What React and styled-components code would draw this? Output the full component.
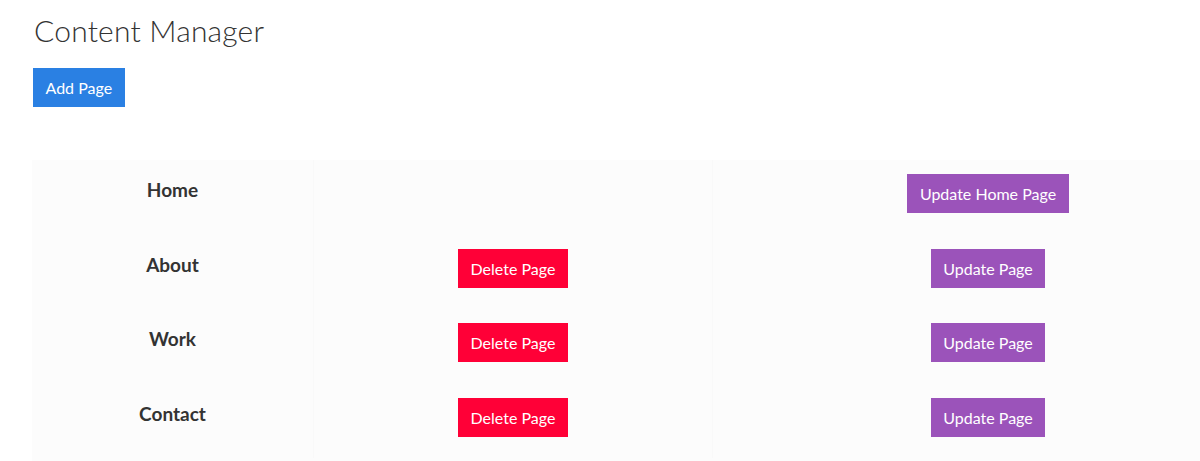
import React from 'react'
import styled, { createGlobalStyle } from 'styled-components'

const pages = [
    { id: 1, name: 'Home', home: true },
    { id: 2, name: 'About' },
    { id: 3, name: 'Work' },
    { id: 4, name: 'Contact' },
]

function App() {
  return (
    <Page>
        <GlobalStyle />
        <Title>Content Manager</Title>
        <Button color="#2a80e3">Add Page</Button>
        <Table>
            {pages.map((p) => (
                <Row key={p.id}>
                    <NameCell>{p.name}</NameCell>
                    <Cell>
                        {!p.home && <Button color="#ff0037">Delete Page</Button>}
                    </Cell>
                    <Cell wide>
                        <Button color="#9b53ba">{p.home ? 'Update Home Page' : 'Update Page'}</Button>
                    </Cell>
                </Row>
            ))}
        </Table>
    </Page>
  )
}

const GlobalStyle = createGlobalStyle`
    html, body{
        margin: 0;
        background: #fff;
        overflow: hidden;
    }
    body{
        font-family: "Source Sans Pro", Lato, "Liberation Sans", sans-serif;
        color: #333;
    }
`

const Page = styled.div`
    padding: 10px 0 0 33px;
`

const Title = styled.h1`
    font-size: 30px;
    font-weight: 300;
    line-height: 40px;
    margin: 0 0 18px 1px;
    color: #333;
    letter-spacing: 0.2px;
`

const Button = styled.button`
    display: inline-block;
    font-family: inherit;
    font-size: 16px;
    line-height: 39px;
    height: 39px;
    padding: 0 12.5px;
    border: none;
    border-radius: 0;
    color: white;
    background-color: ${(p) => p.color};
    cursor: pointer;
`

const Table = styled.div`
    margin: 53px 0 0 -1px;
    padding-bottom: 12px;
    display: grid;
    grid-template-columns: 281px 399px 1fr;
    background: #fcfcfc;
`

const Row = styled.div`
    display: contents;
`

const Cell = styled.div`
    height: 74.5px;
    padding-top: 14px;
    padding-left: ${(p) => (p.wide ? '63px' : '0')};
    box-sizing: border-box;
    text-align: center;
    border-left: 1px solid #f9f9f9;
`

const NameCell = styled.div`
    height: 74.5px;
    padding-top: 18px;
    box-sizing: border-box;
    text-align: center;
    font-size: 19px;
    font-weight: 700;
    line-height: 24px;
`

export default App
